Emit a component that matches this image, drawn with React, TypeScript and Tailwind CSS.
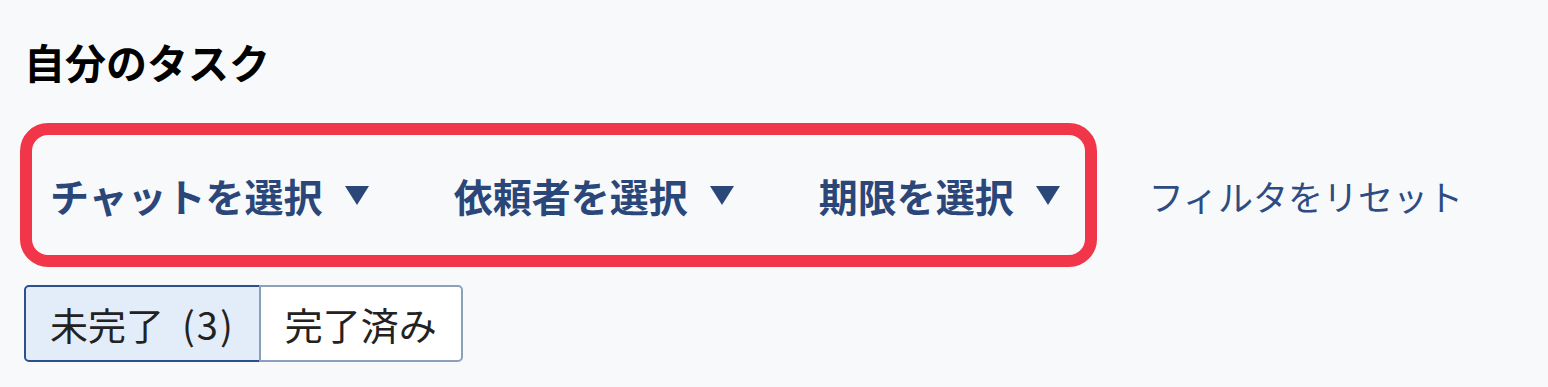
import React, { useState } from 'react';

const filters = ['チャットを選択', '依頼者を選択', '期限を選択'];

const Caret: React.FC = () => (
  <svg width="26" height="21" viewBox="0 0 26 21" className="ml-[21px] shrink-0">
    <path d="M1 1 H25 L13 20 Z" fill="#2b4779" />
  </svg>
);

export default function App() {
  const [tab, setTab] = useState<'open' | 'done'>('open');

  return (
    <div
      className="min-h-screen bg-[#f8f9fb] px-6 pt-[33px]"
      style={{ fontFamily: '"Noto Sans CJK JP", "Noto Sans", sans-serif' }}
    >
      <h1 className="text-[41px] leading-[56px] font-bold text-black">自分のタスク</h1>

      <div className="mt-[34px] flex items-center">
        <div className="-ml-1 flex h-[144px] items-center gap-[84px] rounded-[28px] border-[12px] border-[#f03648] pl-[18px] pr-[24px]">
          {filters.map((f) => (
            <button key={f} type="button" className="flex items-center text-[39px] leading-none font-bold text-[#2b4779]">
              <span>{f}</span>
              <Caret />
            </button>
          ))}
        </div>
        <button type="button" className="ml-[52px] text-[35px] leading-none text-[#2d4c84]">
          フィルタをリセット
        </button>
      </div>

      <div className="mt-[18px] flex">
        <button
          type="button"
          onClick={() => setTab('open')}
          className={`h-[77px] rounded-l-[5px] border-2 px-6 text-[38px] leading-none text-[#222] ${
            tab === 'open' ? 'border-[#2c4f8e] bg-[#e3edf9]' : 'border-[#8aa0bb] bg-white'
          }`}
        >
          未完了<span className="ml-[18px] tracking-[2px]">(3)</span>
        </button>
        <button
          type="button"
          onClick={() => setTab('done')}
          className={`-ml-[2px] h-[77px] rounded-r-[5px] border-2 px-6 text-[38px] leading-none text-[#222] ${
            tab === 'done' ? 'border-[#2c4f8e] bg-[#e3edf9]' : 'border-[#8aa0bb] bg-white'
          }`}
        >
          完了済み
        </button>
      </div>
    </div>
  );
}
